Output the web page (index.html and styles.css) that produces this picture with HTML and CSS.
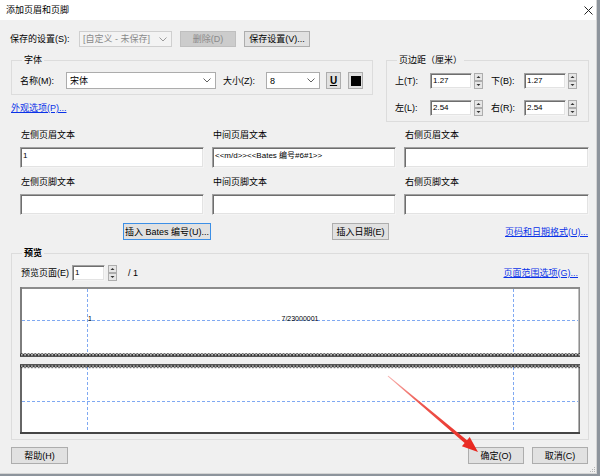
FILE: index.html
```html
<!DOCTYPE html>
<html lang="zh-CN">
<head>
<meta charset="utf-8">
<title>添加页眉和页脚</title>
<link rel="stylesheet" href="styles.css">
</head>
<body>
<div class="window">
  <div class="titlebar">
    <span class="title">添加页眉和页脚</span>
    <svg class="close" width="9" height="9" viewBox="0 0 9 9"><path d="M0.5 0.5L8.5 8.5M8.5 0.5L0.5 8.5" stroke="#222" stroke-width="1" fill="none"/></svg>
  </div>

  <div class="saverow">
    <span class="save-lbl">保存的设置(S):</span>
    <div class="combo disabled w-preset"><span>[自定义 - 未保存]</span><svg class="chev" width="8" height="5" viewBox="0 0 8 5"><polyline points="0.5,0.5 4,4 7.5,0.5" fill="none" stroke="#9a9a9a"/></svg></div>
    <button class="btn disabled w-del">删除(D)</button>
    <button class="btn w-savebtn">保存设置(V)...</button>
  </div>

  <div class="topsec">
    <div class="leftcol">
      <fieldset class="group fontgroup">
        <legend>字体</legend>
        <div class="fontrow">
          <span class="lbl w-name">名称(M):</span>
          <div class="combo w-font"><span>宋体</span><svg class="chev" width="8" height="5" viewBox="0 0 8 5"><polyline points="0.5,0.5 4,4 7.5,0.5" fill="none" stroke="#606060"/></svg></div>
          <span class="lbl w-size">大小(Z):</span>
          <div class="combo w-sizebox"><span>8</span><svg class="chev" width="8" height="5" viewBox="0 0 8 5"><polyline points="0.5,0.5 4,4 7.5,0.5" fill="none" stroke="#606060"/></svg></div>
          <button class="btn ubtn"><span class="u">U</span></button>
          <button class="btn colorbtn"><span class="swatch"></span></button>
        </div>
      </fieldset>
      <a class="link appear" href="#">外观选项(P)...</a>
    </div>

    <fieldset class="group margingroup">
      <legend>页边距（厘米）</legend>
      <div class="mrow">
        <span class="lbl w-m1">上(T):</span>
        <div class="field w-num">1.27</div>
        <svg class="spin" width="9" height="16" viewBox="0 0 9 16"><rect x="0.5" y="0.5" width="8" height="7" fill="#e6e6e6" stroke="#adadad"/><rect x="0.5" y="8.5" width="8" height="7" fill="#e6e6e6" stroke="#adadad"/><path d="M2.5 5L4.5 3L6.5 5Z" fill="#333"/><path d="M2.5 11L4.5 13L6.5 11Z" fill="#333"/></svg>
        <span class="lbl w-m2">下(B):</span>
        <div class="field w-num">1.27</div>
        <svg class="spin" width="9" height="16" viewBox="0 0 9 16"><rect x="0.5" y="0.5" width="8" height="7" fill="#e6e6e6" stroke="#adadad"/><rect x="0.5" y="8.5" width="8" height="7" fill="#e6e6e6" stroke="#adadad"/><path d="M2.5 5L4.5 3L6.5 5Z" fill="#333"/><path d="M2.5 11L4.5 13L6.5 11Z" fill="#333"/></svg>
      </div>
      <div class="mrow second">
        <span class="lbl w-m1">左(L):</span>
        <div class="field w-num">2.54</div>
        <svg class="spin" width="9" height="16" viewBox="0 0 9 16"><rect x="0.5" y="0.5" width="8" height="7" fill="#e6e6e6" stroke="#adadad"/><rect x="0.5" y="8.5" width="8" height="7" fill="#e6e6e6" stroke="#adadad"/><path d="M2.5 5L4.5 3L6.5 5Z" fill="#333"/><path d="M2.5 11L4.5 13L6.5 11Z" fill="#333"/></svg>
        <span class="lbl w-m2">右(R):</span>
        <div class="field w-num">2.54</div>
        <svg class="spin" width="9" height="16" viewBox="0 0 9 16"><rect x="0.5" y="0.5" width="8" height="7" fill="#e6e6e6" stroke="#adadad"/><rect x="0.5" y="8.5" width="8" height="7" fill="#e6e6e6" stroke="#adadad"/><path d="M2.5 5L4.5 3L6.5 5Z" fill="#333"/><path d="M2.5 11L4.5 13L6.5 11Z" fill="#333"/></svg>
      </div>
    </fieldset>
  </div>

  <div class="hfgrid">
    <div class="hfcell"><span class="hflbl">左侧页眉文本</span><div class="field textbox">1</div></div>
    <div class="hfcell"><span class="hflbl">中间页眉文本</span><div class="field textbox">&lt;&lt;m/d&gt;&gt;&lt;&lt;Bates 编号#6#1&gt;&gt;</div></div>
    <div class="hfcell"><span class="hflbl">右侧页眉文本</span><div class="field textbox"></div></div>
    <div class="hfcell"><span class="hflbl">左侧页脚文本</span><div class="field textbox"></div></div>
    <div class="hfcell"><span class="hflbl">中间页脚文本</span><div class="field textbox"></div></div>
    <div class="hfcell"><span class="hflbl">右侧页脚文本</span><div class="field textbox"></div></div>
  </div>

  <div class="insertrow">
    <button class="btn focused w-bates">插入 Bates 编号(U)...</button>
    <button class="btn w-date">插入日期(E)</button>
    <a class="link fmt" href="#">页码和日期格式(U)...</a>
  </div>

  <fieldset class="group preview">
    <legend class="bold">预览</legend>
    <div class="previewrow">
      <span class="lbl w-pv">预览页面(E)</span>
      <div class="field w-page">1</div>
      <svg class="spin pvspin" width="9" height="16" viewBox="0 0 9 16"><rect x="0.5" y="0.5" width="8" height="7" fill="#e6e6e6" stroke="#adadad"/><rect x="0.5" y="8.5" width="8" height="7" fill="#e6e6e6" stroke="#adadad"/><path d="M2.5 5L4.5 3L6.5 5Z" fill="#333"/><path d="M2.5 11L4.5 13L6.5 11Z" fill="#333"/></svg>
      <span class="of">/ 1</span>
      <a class="link range" href="#">页面范围选项(G)...</a>
    </div>
    <svg class="canvas" width="560" height="148" viewBox="0 0 560 148">
      <defs>
        <pattern id="scHead" x="0" y="66" width="3.4" height="4" patternUnits="userSpaceOnUse">
          <circle cx="1.7" cy="1.9" r="1.25" fill="#fff" stroke="#111" stroke-width="0.9"/>
        </pattern>
        <pattern id="scFoot" x="0" y="77" width="3.4" height="4" patternUnits="userSpaceOnUse">
          <circle cx="1.7" cy="2.1" r="1.25" fill="#fff" stroke="#111" stroke-width="0.9"/>
        </pattern>
      </defs>
      <rect x="0" y="0" width="560" height="69" fill="#fff"/>
      <rect x="0" y="78" width="560" height="69" fill="#fff"/>
      <line x1="0" y1="1" x2="560" y2="1" stroke="#8c8c8c" stroke-width="2"/>
      <line x1="1" y1="0" x2="1" y2="69" stroke="#7d7d7d" stroke-width="2"/>
      <line x1="559.2" y1="0" x2="559.2" y2="69" stroke="#8a8a8a" stroke-width="1.5"/>
      <line x1="1" y1="77" x2="1" y2="147" stroke="#666" stroke-width="2"/>
      <line x1="559.2" y1="77" x2="559.2" y2="147" stroke="#707070" stroke-width="1.5"/>
      <line x1="0" y1="146" x2="560" y2="146" stroke="#444" stroke-width="2"/>
      <g stroke="#7fa9f2" stroke-width="1" stroke-dasharray="3 2" fill="none">
        <line x1="67.5" y1="2" x2="67.5" y2="67"/>
        <line x1="493.5" y1="2" x2="493.5" y2="67"/>
        <line x1="2" y1="33.5" x2="558" y2="33.5"/>
        <line x1="67.5" y1="80" x2="67.5" y2="145"/>
        <line x1="493.5" y1="80" x2="493.5" y2="145"/>
        <line x1="2" y1="114.5" x2="558" y2="114.5"/>
      </g>
      <rect x="0" y="66" width="560" height="3.4" fill="url(#scHead)"/>
      <line x1="0" y1="69.5" x2="560" y2="69.5" stroke="#555" stroke-width="1"/>
      <line x1="0" y1="77.5" x2="560" y2="77.5" stroke="#555" stroke-width="1"/>
      <rect x="0" y="78" width="560" height="3.4" fill="url(#scFoot)"/>
      <text x="68" y="33.5" class="cvtext">1</text>
      <text x="280" y="33.5" text-anchor="middle" class="cvtext">7/23000001</text>
    </svg>
  </fieldset>

  <div class="bottomrow">
    <button class="btn w-bot">帮助(H)</button>
    <button class="btn w-bot ok">确定(O)</button>
    <button class="btn w-bot cancel">取消(C)</button>
  </div>

  <svg class="grip" width="7" height="7" viewBox="0 0 7 7"><g fill="#b5b5b5"><rect x="5" y="1" width="1" height="1"/><rect x="3" y="3" width="1" height="1"/><rect x="5" y="3" width="1" height="1"/><rect x="1" y="5" width="1" height="1"/><rect x="3" y="5" width="1" height="1"/><rect x="5" y="5" width="1" height="1"/></g></svg>

  <svg class="arrow" width="600" height="476" viewBox="0 0 600 476">
    <defs>
      <linearGradient id="arrowGrad" x1="388" y1="376" x2="478" y2="452" gradientUnits="userSpaceOnUse">
        <stop offset="0" stop-color="#f7b3b0"/>
        <stop offset="0.35" stop-color="#ee5a52"/>
        <stop offset="1" stop-color="#e8241c"/>
      </linearGradient>
    </defs>
    <polygon points="387.6,376.3 464.6,443.1 461.9,446.3 478,452 469.7,437.1 467.0,440.3 388.4,375.7" fill="url(#arrowGrad)"/>
  </svg>
</div>
</body>
</html>
```

FILE: styles.css
```css
* { box-sizing: border-box; }

html, body {
  margin: 0;
  padding: 0;
}

body {
  width: 600px;
  height: 476px;
  overflow: hidden;
  background: #8d949c;
  font-family: "Liberation Sans", "Noto Sans CJK SC", sans-serif;
  font-size: 9px;
  color: #000;
}

.window {
  position: relative;
  width: 597px;
  height: 474px;
  background: #f0f0f0;
  border-right: 1px solid #d4d4d4;
  border-bottom: 1px solid #d4d4d4;
  display: flex;
  flex-direction: column;
}

.titlebar {
  height: 20px;
  background: #fff;
  display: flex;
  align-items: center;
  justify-content: space-between;
  padding: 0 3px 0 6px;
  flex: none;
}

.title {
  line-height: 12px;
}

.close { display: block; }

.lbl, .save-lbl, .hflbl, .of {
  line-height: 12px;
  white-space: nowrap;
}

.saverow {
  margin-top: 11px;
  height: 16px;
  display: flex;
  align-items: center;
  padding-left: 10px;
  flex: none;
}

.save-lbl { width: 69px; }

.combo {
  height: 16px;
  display: flex;
  align-items: center;
  justify-content: space-between;
  background: #fff;
  border: 1px solid #acacac;
  padding: 0 4px 0 3px;
  white-space: nowrap;
  line-height: 12px;
}

.combo.disabled {
  background: #f3f3f3;
  border-color: #cfcfcf;
  color: #8a8a8a;
}

.chev { display: block; flex: none; }

.w-preset { width: 93px; }

.btn {
  height: 16px;
  padding: 0;
  margin: 0;
  font: inherit;
  color: #000;
  background: #e1e1e1;
  border: 1px solid #adadad;
  white-space: nowrap;
  line-height: 12px;
  text-align: center;
}

.btn.disabled {
  background: #cccccc;
  border-color: #bfbfbf;
  color: #8a8a8a;
}

.btn.focused {
  border-color: #3c8fe6;
  background: #e1e1e1;
}

.w-del { width: 56px; margin-left: 8px; }
.w-savebtn { width: 66px; margin-left: 8px; }

.topsec {
  margin-top: 7px;
  padding-left: 11px;
  display: flex;
  align-items: flex-start;
  gap: 13px;
  flex: none;
}

.leftcol {
  width: 362px;
  display: flex;
  flex-direction: column;
  align-items: flex-start;
}

.group {
  margin: 0;
  min-width: 0;
  border: 1px solid #dcdcdc;
}

.group legend {
  margin-left: 2px;
  padding: 0 2px;
  line-height: 12px;
  font-size: 9px;
}

.group legend.bold { font-weight: bold; }

.fontgroup {
  width: 362px;
  padding: 6px 0 5px 8px;
}

.fontrow {
  height: 17px;
  display: flex;
  align-items: center;
}

.w-name { width: 46px; }
.w-font { width: 150px; height: 17px; }
.w-size { width: 43px; margin-left: 7px; }
.w-sizebox { width: 54px; height: 17px; }

.ubtn {
  width: 15px;
  height: 17px;
  margin-left: 6px;
  display: flex;
  align-items: center;
  justify-content: center;
}

.u {
  font-weight: bold;
  font-size: 10px;
  text-decoration: underline;
  line-height: 11px;
}

.colorbtn {
  width: 15px;
  height: 17px;
  margin-left: 7px;
  display: flex;
  align-items: center;
  justify-content: center;
}

.swatch {
  display: block;
  width: 10px;
  height: 10px;
  background: #000;
}

.link {
  color: #0a32e8;
  text-decoration: underline;
  line-height: 12px;
  white-space: nowrap;
}

.appear { margin-top: 7px; }

.margingroup {
  width: 203px;
  padding: 7px 0 5px 8px;
}

.mrow {
  height: 16px;
  display: flex;
  align-items: center;
}

.mrow.second { margin-top: 11px; }

.w-m1 { width: 35px; }
.w-m2 { width: 33px; margin-left: 8px; }

.field {
  background: #fff;
  border-style: solid;
  border-width: 1px;
  border-color: #a0a0a0 #f4f4f4 #f4f4f4 #a0a0a0;
  box-shadow: inset 1px 1px 0 #6e6e6e, inset -1px -1px 0 #e3e3e3;
  white-space: nowrap;
  overflow: hidden;
}

.w-num {
  width: 42px;
  height: 16px;
  padding: 1px 0 0 2px;
  font-size: 8px;
  line-height: 12px;
}

.spin {
  display: block;
  flex: none;
  margin-left: 2px;
}

.hfgrid {
  margin-top: 7px;
  padding-left: 20px;
  display: grid;
  grid-template-columns: 184px 184px 185px;
  column-gap: 8px;
  row-gap: 8px;
  flex: none;
}

.hfcell {
  display: flex;
  flex-direction: column;
}

.hflbl {
  padding-left: 1px;
  margin-bottom: 6px;
}

.textbox {
  height: 21px;
  padding: 2px 0 0 2px;
  font-size: 8px;
  line-height: 11px;
}

.insertrow {
  margin-top: 8px;
  height: 17px;
  display: flex;
  align-items: center;
  padding-left: 123px;
  padding-right: 8px;
  flex: none;
}

.w-bates { width: 88px; height: 17px; }
.w-date { width: 57px; height: 17px; margin-left: 121px; }
.fmt { margin-left: auto; }

.preview {
  margin: 7px 0 0 11px;
  width: 578px;
  padding: 6px 8px 4px 8px;
  flex: none;
}

.previewrow {
  height: 16px;
  display: flex;
  align-items: center;
  padding-left: 1px;
}

.w-pv { width: 51px; }

.w-page {
  width: 33px;
  height: 16px;
  padding: 1px 0 0 2px;
  font-size: 8px;
  line-height: 12px;
}

.pvspin { margin-left: 3px; }

.of { margin-left: 11px; }

.range { margin-left: auto; margin-right: 2px; }

.canvas {
  display: block;
  margin-top: 6px;
}

.cvtext {
  font-family: "Liberation Sans", sans-serif;
  font-size: 7px;
  fill: #000;
}

.bottomrow {
  margin-top: 7px;
  height: 17px;
  display: flex;
  align-items: center;
  padding: 0 8px 0 11px;
  flex: none;
}

.w-bot { width: 57px; height: 17px; }
.ok { margin-left: auto; width: 56px; }
.cancel { margin-left: 8px; width: 56px; }

.grip {
  position: absolute;
  right: 0;
  bottom: 0;
  display: block;
}

.arrow {
  position: absolute;
  left: 0;
  top: 0;
  pointer-events: none;
}
```
